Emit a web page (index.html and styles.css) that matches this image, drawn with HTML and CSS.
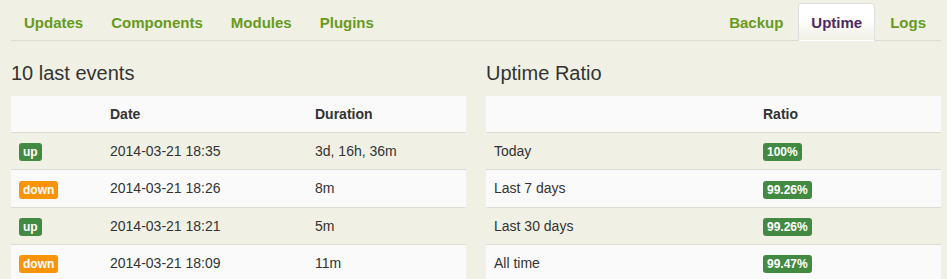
FILE: index.html
```html
<!DOCTYPE html>
<html lang="en">
<head>
    <meta charset="UTF-8">
    <meta name="viewport" content="width=device-width, initial-scale=1.0">
    <title>Uptime</title>
    <link rel="stylesheet" href="styles.css">
</head>
<body>
<div class="container">
    <!-- tabs -->
    <ul class="nav-tabs">
        <li><a href="#">Updates</a></li>
        <li><a href="#">Components</a></li>
        <li><a href="#">Modules</a></li>
        <li><a href="#">Plugins</a></li>
        <li class="push"><a href="#">Backup</a></li>
        <li class="active"><a href="#">Uptime</a></li>
        <li><a href="#">Logs</a></li>
    </ul>

    <div class="row">
        <div class="span">
            <h3>10 last events</h3>
            <table class="table events">
                <thead>
                    <tr><th></th><th>Date</th><th>Duration</th></tr>
                </thead>
                <tbody>
                    <tr><td><span class="label label-success">up</span></td><td>2014-03-21 18:35</td><td>3d, 16h, 36m</td></tr>
                    <tr><td><span class="label label-warning">down</span></td><td>2014-03-21 18:26</td><td>8m</td></tr>
                    <tr><td><span class="label label-success">up</span></td><td>2014-03-21 18:21</td><td>5m</td></tr>
                    <tr><td><span class="label label-warning">down</span></td><td>2014-03-21 18:09</td><td>11m</td></tr>
                </tbody>
            </table>
        </div>
        <div class="span">
            <h3>Uptime Ratio</h3>
            <table class="table ratio">
                <thead>
                    <tr><th></th><th>Ratio</th></tr>
                </thead>
                <tbody>
                    <tr><td>Today</td><td><span class="label label-success">100%</span></td></tr>
                    <tr><td>Last 7 days</td><td><span class="label label-success">99.26%</span></td></tr>
                    <tr><td>Last 30 days</td><td><span class="label label-success">99.26%</span></td></tr>
                    <tr><td>All time</td><td><span class="label label-success">99.47%</span></td></tr>
                </tbody>
            </table>
        </div>
    </div>
</div>
</body>
</html>
```

FILE: styles.css
```css
body {
    font-family: "Liberation Sans", Arial, sans-serif;
    font-size: 14px;
    line-height: 20px;
    color: #333;
    margin: 0;
    padding: 0;
    background-color: #f0f0e4;
}
.container {
    width: 930px;
    margin-left: 11px;
    padding-top: 3px;
}
.nav-tabs {
    display: flex;
    list-style: none;
    margin: 0;
    padding: 0;
    border-bottom: 1px solid #dcdcd4;
}
.nav-tabs li {
    margin-right: 2px;
    margin-bottom: -1px;
}
.nav-tabs li.push {
    margin-left: auto;
}
.nav-tabs a {
    display: block;
    padding: 9px 12px 7px;
    font-size: 15px;
    font-weight: bold;
    line-height: 20px;
    color: #679a1d;
    text-decoration: none;
    border: 1px solid transparent;
    border-radius: 4px 4px 0 0;
}
.nav-tabs li.active a {
    color: #4e2a62;
    background: linear-gradient(#ffffff 40%, #f0f0e4);
    border-color: #dedede #dedede transparent;
}
.row {
    display: grid;
    grid-template-columns: 455px 455px;
    column-gap: 20px;
}
h3 {
    font-size: 20px;
    font-weight: normal;
    line-height: 24px;
    margin: 20px 0 11px;
    color: #333;
}
.table {
    width: 100%;
    border-collapse: collapse;
}
.table th, .table td {
    padding: 8px;
    line-height: 20px;
    text-align: left;
    vertical-align: middle;
    border-top: 1px solid #dcdcd4;
}
.table thead th {
    border-top: none;
    background-color: #fafafa;
    font-weight: bold;
}
.table tbody tr:nth-child(even) td {
    background-color: #fafafa;
}
.events th:first-child, .events td:first-child {
    width: 75px;
}
.events th:nth-child(2), .events td:nth-child(2) {
    width: 189px;
}
.ratio th:first-child, .ratio td:first-child {
    width: 253px;
}
.label {
    display: inline-block;
    padding: 2px 4px;
    font-size: 12px;
    font-weight: bold;
    line-height: 14px;
    color: #fff;
    border-radius: 3px;
    vertical-align: middle;
}
.label-success {
    background-color: #428a42;
}
.label-warning {
    background-color: #f89406;
}
```
